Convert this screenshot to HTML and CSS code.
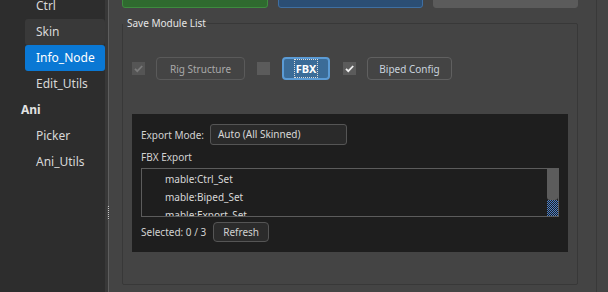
FILE: index.html
```html
<!DOCTYPE html>
<html lang="en">
<head>
  <meta charset="UTF-8">
  <meta name="viewport" content="width=device-width, initial-scale=1.0">
  <title>Info_Node</title>
  <link rel="stylesheet" href="styles.css">
</head>
<body>
  <div class="app">
    <!-- Menu de gauche -->
    <aside class="sidebar">
      <ul class="nav">
        <li class="nav-item">Ctrl</li>
        <li class="nav-item hover">Skin</li>
        <li class="nav-item active">Info_Node</li>
        <li class="nav-item">Edit_Utils</li>
        <li class="nav-head">Ani</li>
        <li class="nav-item">Picker</li>
        <li class="nav-item">Ani_Utils</li>
      </ul>
    </aside>

    <div class="splitter"><span class="grip"></span></div>

    <main class="main">
      <div class="top-actions">
        <button class="top-btn green"></button>
        <button class="top-btn blue"></button>
        <button class="top-btn grey"></button>
      </div>

      <fieldset class="group">
        <legend>Save Module List</legend>

        <div class="module-row">
          <span class="check disabled">
            <svg viewBox="0 0 13 13"><path d="M3 6.8l2.3 2.3L10.2 4" /></svg>
          </span>
          <button class="btn muted rig">Rig Structure</button>
          <span class="check"></span>
          <button class="btn primary"><span class="focus">FBX</span></button>
          <span class="check">
            <svg viewBox="0 0 13 13"><path d="M3 6.8l2.3 2.3L10.2 4" /></svg>
          </span>
          <button class="btn biped">Biped Config</button>
        </div>

        <div class="panel">
          <div class="mode-row">
            <span class="label">Export Mode:</span>
            <div class="combo">Auto (All Skinned)</div>
          </div>
          <div class="label section">FBX Export</div>
          <div class="list">
            <ul class="list-items">
              <li>mable:Ctrl_Set</li>
              <li>mable:Biped_Set</li>
              <li>mable:Export_Set</li>
            </ul>
            <div class="scrollbar"><span class="thumb"></span><span class="page"></span></div>
          </div>
          <div class="footer-row">
            <span class="label">Selected: 0 / 3</span>
            <button class="btn dark">Refresh</button>
          </div>
        </div>
      </fieldset>
    </main>

    <div class="vbar"></div>
  </div>
</body>
</html>
```

FILE: styles.css
```css
/* Style général */
* {
  box-sizing: border-box;
}

body {
  margin: 0;
  font-family: "Segoe UI", "Noto Sans", sans-serif;
  font-size: 10px;
  color: #d6d6d6;
  background: #444444;
  overflow: hidden;
}

button {
  font-family: inherit;
  font-size: inherit;
}

.app {
  display: flex;
  height: 292px;
}

/* Menu de gauche */
.sidebar {
  width: 105px;
  flex-shrink: 0;
  background: #2d2d2d;
  overflow: hidden;
  font-size: 12px;
}

.nav {
  list-style: none;
  margin: -7px 0 0;
  padding: 0;
}

.nav-item {
  height: 26px;
  line-height: 26px;
  margin-left: 25px;
  padding-left: 11px;
  border-radius: 3px;
  color: #d8d8d8;
}

.nav-item.hover {
  background: #393939;
}

.nav-item.active {
  background: #0a78d4;
  color: #ffffff;
}

.nav-head {
  height: 26px;
  line-height: 26px;
  padding-left: 21px;
  font-weight: bold;
  color: #e2e2e2;
}

/* Séparateur */
.splitter {
  width: 4px;
  flex-shrink: 0;
  background: #383838;
  border-right: 1px solid #5e5e5e;
  display: flex;
  align-items: center;
  justify-content: flex-end;
  padding-top: 134px;
}

.grip {
  width: 3px;
  height: 14px;
  margin-right: -2px;
  background: repeating-conic-gradient(#c8c8c8 0 25%, #444444 0 100%) 0 0 / 2px 2px;
}

/* Zone principale */
.main {
  width: 488px;
  flex-shrink: 0;
  padding: 0 18px 0 13px;
  border-right: 1px solid #393939;
}

.top-actions {
  display: grid;
  grid-template-columns: 146px 145px 145px;
  column-gap: 10px;
  margin-top: -20px;
}

.top-btn {
  height: 28px;
  border-radius: 3px;
  border: 1px solid transparent;
}

.top-btn.green {
  background: #2f6a2f;
  border-color: #3e8b3f;
}

.top-btn.blue {
  background: #2b4e74;
  border-color: #3f6fa2;
}

.top-btn.grey {
  background: #5b5b5b;
  border-color: #5b5b5b;
}

/* Groupe */
.group {
  margin: 7px 0 0;
  padding: 26px 9px 0 9px;
  height: 270px;
  border: 1px solid #383838;
  border-radius: 2px;
  min-width: 0;
}

.group legend {
  margin-left: -9px;
  padding: 0 0 0 4px;
  line-height: 16px;
  color: #e6e6e6;
}

.module-row {
  display: flex;
  align-items: center;
  height: 23px;
}

.check {
  width: 13px;
  height: 13px;
  background: #5b5b5b;
  display: flex;
}

.check svg {
  width: 13px;
  height: 13px;
  fill: none;
  stroke: #f0f0f0;
  stroke-width: 1.8;
}

.check.disabled {
  background: #555555;
}

.check.disabled svg {
  stroke: #7a7a7a;
}

.btn {
  height: 23px;
  padding: 0;
  margin: 0 12px 0 11px;
  border: 1px solid #606060;
  border-radius: 4px;
  background: #444444;
  color: #c9d3de;
}

.btn.rig {
  width: 89px;
}

.btn.biped {
  width: 85px;
}

.btn.muted {
  color: #a9a9a9;
  border-color: #5a5a5a;
}

.btn.primary {
  width: 48px;
  margin-left: 12px;
  margin-right: 13px;
  border: 2px solid #5b9bd5;
  background: #3b6c98;
  color: #ffffff;
  font-weight: bold;
  font-size: 11px;
}

.focus {
  padding: 1px 1px;
  border: 1px dotted #d8d8d8;
}

/* Panneau sombre */
.panel {
  margin-top: 34px;
  height: 138px;
  padding: 10px 9px 10px 9px;
  background: #1e1e1e;
}

.label {
  color: #d2d2d2;
}

.mode-row {
  display: flex;
  align-items: center;
  gap: 6px;
}

.combo {
  width: 137px;
  height: 21px;
  line-height: 19px;
  padding-left: 7px;
  border: 1px solid #555555;
  border-radius: 3px;
  background: #2a2a2a;
  color: #d8d8d8;
}

.section {
  height: 18px;
  line-height: 18px;
  margin-top: 3px;
}

.list {
  display: flex;
  height: 49px;
  margin-top: 2px;
  border: 1px solid #5c5c5c;
  overflow: hidden;
}

.list-items {
  flex: 1;
  list-style: none;
  margin: 0;
  padding: 1px 0 0 23px;
  color: #d8d8d8;
}

.list-items li {
  height: 18px;
  line-height: 18px;
}

.scrollbar {
  width: 11px;
  display: flex;
  flex-direction: column;
}

.thumb {
  height: 31px;
  background: #5c5c5c;
  border-radius: 0 0 3px 3px;
}

.page {
  flex: 1;
  background: repeating-conic-gradient(#4a7fca 0 25%, #1e1e1e 0 50%) 0 0 / 2px 2px;
}

.footer-row {
  display: flex;
  align-items: center;
  margin-top: 5px;
}

.btn.dark {
  height: 20px;
  margin-left: 7px;
  padding: 0 9px;
  background: #2b2b2b;
  border-color: #555555;
  color: #d0d0d0;
}

.vbar {
  flex: 1;
}
```
